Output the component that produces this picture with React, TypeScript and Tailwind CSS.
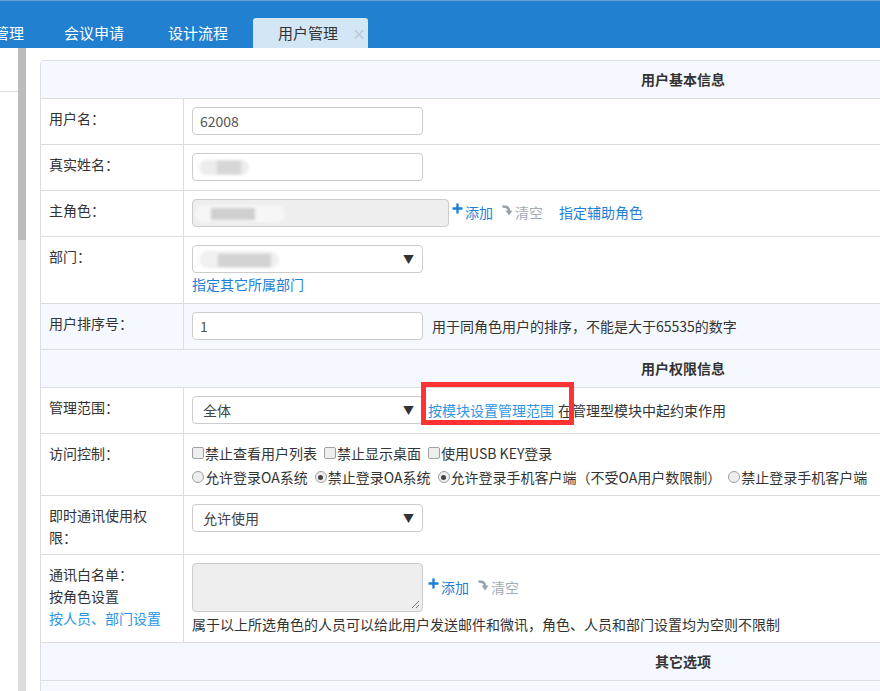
import React from "react";

const font = { fontFamily: '"Noto Sans CJK SC", "Microsoft YaHei", sans-serif' };

function Blur({ className }: { className: string }) {
  return <div className={"absolute blur-[1.5px] " + className} />;
}

function TextBox({
  value,
  width = "w-[231px]",
  gray,
  children,
}: {
  value?: string;
  width?: string;
  gray?: boolean;
  children?: React.ReactNode;
}) {
  return (
    <div
      className={
        "relative h-[28px] shrink-0 border border-[#ccc] rounded-[4px] px-[7px] flex items-center text-[14px] text-[#555] " +
        width +
        (gray ? " bg-[#eee]" : " bg-white")
      }
    >
      {value}
      {children}
    </div>
  );
}

function Select({ value, children }: { value?: string; children?: React.ReactNode }) {
  return (
    <div className="relative h-[28px] w-[231px] shrink-0 border border-[#ccc] rounded-[4px] pl-[10px] pr-[8px] flex items-center justify-between text-[14px] text-[#444] bg-white">
      <span>{value}</span>
      {children}
      <span className="text-[11px] text-[#333]">▼</span>
    </div>
  );
}

function PlusIcon() {
  return (
    <svg width="11" height="11" viewBox="0 0 11 11" className="mb-[8px] mr-[2px]">
      <path d="M5.5 0.5v10M0.5 5.5h10" stroke="#1e7fd6" strokeWidth="2.4" />
    </svg>
  );
}

function ClearIcon() {
  return (
    <svg width="12" height="13" viewBox="0 0 12 13" className="mb-[5px] mr-[1px]">
      <path d="M0.5 2.5c3.5 0 6.5 0.5 6.5 4.5" stroke="#9aa2ab" strokeWidth="2.6" fill="none" />
      <path d="M3.5 6.5h7l-3.5 5z" fill="#9aa2ab" />
    </svg>
  );
}

function AddClear() {
  return (
    <div className="flex items-end text-[14px] leading-[20px]">
      <PlusIcon />
      <span className="text-[#1e80d8]">添加</span>
      <span className="w-[9px]" />
      <ClearIcon />
      <span className="text-[#a4abb3]">清空</span>
    </div>
  );
}

function Option({
  label,
  checked,
  radio,
}: {
  label: string;
  checked?: boolean;
  radio?: boolean;
}) {
  return (
    <span className="inline-flex items-center mr-[7px]">
      <span
        className={
          "inline-flex items-center justify-center w-[12px] h-[12px] border border-[#a0a0a0] bg-[#eee] mr-[1px] " +
          (radio ? "rounded-full" : "rounded-[2px]")
        }
      >
        {checked && <span className="w-[5px] h-[5px] rounded-full bg-[#444]" />}
      </span>
      {label}
    </span>
  );
}

function Row({
  label,
  h,
  light,
  children,
}: {
  label: React.ReactNode;
  h: string;
  light?: boolean;
  children: React.ReactNode;
}) {
  return (
    <div className={"flex border-b border-[#ddd] " + h + (light ? " bg-[#f5f9ff]" : "")}>
      <div className="w-[143px] shrink-0 border-r border-[#ddd] pl-[8px] pt-[8px] leading-[22px] text-[14px] text-[#333]">
        {label}
      </div>
      <div className="flex-1 pl-[8px] pt-[8px] text-[14px] text-[#333]">{children}</div>
    </div>
  );
}

function Header({ title }: { title: string }) {
  return (
    <div className="h-[38px] border-b border-[#ddd] bg-[#f5f9ff] text-center leading-[37px] text-[14px] font-bold text-[#333]">
      {title}
    </div>
  );
}

export default function App() {
  return (
    <div className="w-[880px] h-[691px] overflow-hidden bg-white relative" style={font}>
      {/* top tabs */}
      <div className="h-[48px] bg-[#2180d0] border-t border-[#6b9fcf] flex items-end text-[15px] whitespace-nowrap">
        <span className="ml-[-6px] w-[70px] h-[30px] leading-[30px] text-white shrink-0">管理</span>
        <span className="w-[104px] h-[30px] leading-[30px] text-white shrink-0">会议申请</span>
        <span className="w-[85px] h-[30px] leading-[30px] text-white shrink-0">设计流程</span>
        <span className="w-[115px] h-[30px] shrink-0 bg-[#d3e6f6] rounded-t-[3px] pl-[25px] flex items-center text-[#333]">
          用户管理
          <span className="ml-[14px] text-[#c0cad3] text-[14px] font-bold">×</span>
        </span>
      </div>

      <div className="flex h-[643px]">
        <div className="w-[18px] shrink-0">
          <div className="h-[44px] border-b border-[#ddd]" />
        </div>
        <div className="w-[8px] shrink-0 flex flex-col">
          <div className="h-[192px] bg-[#bcbcbc]" />
          <div className="flex-1 bg-[#dcdcdc]" />
        </div>
        <div className="w-[14px] shrink-0" />

        <div className="pt-[12px]">
          <div className="w-[1286px] border border-[#ddd] rounded-tl-[4px] overflow-hidden bg-white">
            <Header title="用户基本信息" />

            <Row label="用户名：" h="h-[46px]">
              <TextBox value="62008" />
            </Row>

            <Row label="真实姓名：" h="h-[46px]">
              <TextBox>
                <Blur className="left-[6px] top-[6px] w-[50px] h-[15px] bg-[#ececec] rounded-full" />
                <Blur className="left-[24px] top-[7px] w-[24px] h-[13px] bg-[#d6d6d6]" />
              </TextBox>
            </Row>

            <Row label="主角色：" h="h-[46px]">
              <div className="flex items-center">
                <TextBox width="w-[257px]" gray>
                  <Blur className="left-[2px] top-[5px] w-[90px] h-[17px] bg-[#f6f6f6] rounded-full" />
                  <Blur className="left-[18px] top-[8px] w-[44px] h-[12px] bg-[#cfcfcf]" />
                </TextBox>
                <div className="ml-[3px] -mt-[2px]">
                  <AddClear />
                </div>
                <span className="ml-[16px] text-[#1e80d8] -mt-[1px]">指定辅助角色</span>
              </div>
            </Row>

            <Row label="部门：" h="h-[67px]">
              <Select>
                <Blur className="left-[6px] top-[5px] w-[80px] h-[17px] bg-[#f0f0f0] rounded-full" />
                <Blur className="left-[25px] top-[8px] w-[53px] h-[13px] bg-[#d2d2d2]" />
              </Select>
              <div className="mt-[1px] leading-[20px] text-[14px] text-[#1e80d8]">指定其它所属部门</div>
            </Row>

            <Row label="用户排序号：" h="h-[46px]" light>
              <div className="flex items-center">
                <TextBox value="1" />
                <span className="ml-[9px]">用于同角色用户的排序，不能是大于65535的数字</span>
              </div>
            </Row>

            <Header title="用户权限信息" />

            <Row label="管理范围：" h="h-[46px]">
              <div className="flex items-center">
                <Select value="全体" />
                <div className="relative ml-[5px] flex items-center">
                  <span className="text-[#2f95e3]">按模块设置管理范围</span>
                  <span className="ml-[4px]">在管理型模块中起约束作用</span>
                  <div className="absolute left-[-7px] top-[-18px] w-[153px] h-[43px] border-[5px] border-[#ff3333]" />
                </div>
              </div>
            </Row>

            <Row label="访问控制：" h="h-[62px]">
              <div className="-mt-[1px] leading-[24px] whitespace-nowrap">
                <div className="flex">
                  <Option label="禁止查看用户列表" />
                  <Option label="禁止显示桌面" />
                  <Option label="使用USB KEY登录" />
                </div>
                <div className="flex">
                  <Option radio label="允许登录OA系统" />
                  <Option radio checked label="禁止登录OA系统" />
                  <Option radio checked label="允许登录手机客户端（不受OA用户数限制）" />
                  <Option radio label="禁止登录手机客户端" />
                </div>
              </div>
            </Row>

            <Row
              label={
                <>
                  即时通讯使用权
                  <br />
                  限：
                </>
              }
              h="h-[59px]"
            >
              <Select value="允许使用" />
            </Row>

            <Row
              label={
                <>
                  通讯白名单：
                  <br />
                  按角色设置
                  <br />
                  <span className="text-[#2f95e3]">按人员、部门设置</span>
                </>
              }
              h="h-[88px]"
            >
              <div className="flex items-center">
                <div className="h-[49px] w-[231px] shrink-0 bg-[#eee] border border-[#ccc] rounded-[4px] flex items-end justify-end p-[2px]">
                  <svg width="10" height="10" viewBox="0 0 10 10">
                    <path d="M9 2L2 9M9 6L6 9" stroke="#777" strokeWidth="1" />
                  </svg>
                </div>
                <div className="ml-[5px] -mt-[2px]">
                  <AddClear />
                </div>
              </div>
              <div className="mt-[1px] leading-[22px]">
                属于以上所选角色的人员可以给此用户发送邮件和微讯，角色、人员和部门设置均为空则不限制
              </div>
            </Row>

            <Header title="其它选项" />
            <div className="h-[46px] bg-[#f5f9ff]" />
          </div>
        </div>
      </div>
    </div>
  );
}
